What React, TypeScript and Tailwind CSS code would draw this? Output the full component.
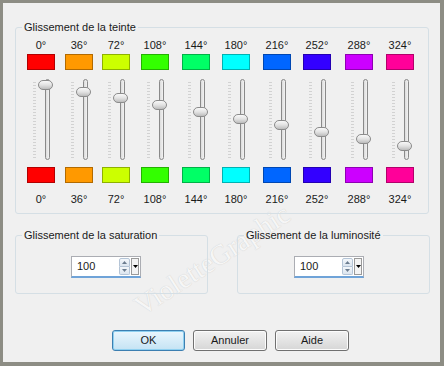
import type { ReactNode } from "react"

const hues = [
  { deg: "0°", color: "bg-[#ff0000]", ml: "ml-0", pos: 8 },
  { deg: "36°", color: "bg-[#ff9900]", ml: "ml-[10px]", pos: 15 },
  { deg: "72°", color: "bg-[#ccff00]", ml: "ml-[9px]", pos: 21 },
  { deg: "108°", color: "bg-[#33ff00]", ml: "ml-[11px]", pos: 28 },
  { deg: "144°", color: "bg-[#00ff66]", ml: "ml-[13px]", pos: 35 },
  { deg: "180°", color: "bg-[#00ffff]", ml: "ml-[12px]", pos: 42 },
  { deg: "216°", color: "bg-[#0066ff]", ml: "ml-[13px]", pos: 48 },
  { deg: "252°", color: "bg-[#3300ff]", ml: "ml-[12px]", pos: 55 },
  { deg: "288°", color: "bg-[#cc00ff]", ml: "ml-[14px]", pos: 62 },
  { deg: "324°", color: "bg-[#ff0099]", ml: "ml-[13px]", pos: 69 },
]

const ticks = Array.from({ length: 26 }, (_, i) => 5 + i * 3)

function Slider({ pos }: { pos: number }) {
  return (
    <svg width="28" height="85" viewBox="0 0 28 85">
      <defs>
        <linearGradient id="thumb" x1="0" y1="0" x2="0" y2="1">
          <stop offset="0" stopColor="#fbfbfb" />
          <stop offset="0.5" stopColor="#e2e2e2" />
          <stop offset="1" stopColor="#b8b8b8" />
        </linearGradient>
        <linearGradient id="track" x1="0" y1="0" x2="1" y2="0">
          <stop offset="0" stopColor="#d8d8d8" />
          <stop offset="1" stopColor="#f6f6f6" />
        </linearGradient>
      </defs>
      {ticks.map((y) => (
        <line key={y} x1="6" x2="9" y1={y + 0.5} y2={y + 0.5} stroke="#d2d2d2" />
      ))}
      <rect x="18.5" y="2.5" width="4" height="80" rx="2" fill="url(#track)" stroke="#8a8a8a" />
      <rect x="11.5" y={pos - 4.5} width="14" height="9" rx="4.5" fill="url(#thumb)" stroke="#8b8b8b" />
    </svg>
  )
}

function Group({ title, className, children }: { title: string; className: string; children: ReactNode }) {
  return (
    <fieldset className={`rounded-[3px] border border-[#d5dfe5] ${className}`}>
      <legend className="ml-[6px] whitespace-nowrap px-[2px] leading-[15px]">{title}</legend>
      {children}
    </fieldset>
  )
}

function SpinBox() {
  return (
    <div className="flex h-[22px] w-[70px] border border-[#abadb3] border-b-2 border-b-[#6fa3d8] bg-white">
      <span className="flex-1 pl-[5px] leading-[19px]">100</span>
      <div className="my-[1px] flex w-[11px] flex-col">
        <div className="flex flex-1 items-center justify-center rounded-t-[2px] border border-[#b4c4d6] bg-gradient-to-b from-[#f4f7fb] to-[#dbe5ef]">
          <svg width="5" height="3" viewBox="0 0 5 3"><path d="M0 3 L2.5 0 L5 3 Z" fill="#6b7c8f" /></svg>
        </div>
        <div className="flex flex-1 items-center justify-center rounded-b-[2px] border border-t-0 border-[#b4c4d6] bg-gradient-to-b from-[#f4f7fb] to-[#dbe5ef]">
          <svg width="5" height="3" viewBox="0 0 5 3"><path d="M0 0 L2.5 3 L5 0 Z" fill="#6b7c8f" /></svg>
        </div>
      </div>
      <div className="mx-[1px] my-[1px] flex w-[8px] items-center justify-center border border-[#9a9a9a] bg-[#f4f4f4]">
        <svg width="5" height="3" viewBox="0 0 5 3"><path d="M0 0 L2.5 3 L5 0 Z" fill="#000" /></svg>
      </div>
    </div>
  )
}

function Button({ label, primary }: { label: string; primary?: boolean }) {
  return (
    <button
      className={`h-[21px] rounded-[3px] border bg-gradient-to-b leading-[19px] ${
        primary
          ? "w-[73px] border-[#3c7fb1] from-[#eaf6fd] to-[#c4e3f4] shadow-[inset_0_0_0_1px_#8fd0f0]"
          : "w-[74px] border-[#707070] from-[#f2f2f2] to-[#d6d6d6] shadow-[inset_0_0_0_1px_#fcfcfc]"
      }`}
    >
      {label}
    </button>
  )
}

export default function App() {
  return (
    <div className="h-[366px] w-[444px] bg-[#8d8d84] pb-[4px] pl-[3px] pr-[4px] pt-[3px] font-['Liberation_Sans',Arial,sans-serif] text-[11px] text-[#1a1a1a]">
      <div className="relative h-full overflow-hidden bg-[#f0f0f0]">
        <div className="pointer-events-none absolute left-[120px] top-[236px] -rotate-[33deg] font-['Liberation_Serif',serif] text-[28px] text-[#f6f6f6] [text-shadow:0_0_1px_#c4c4c4]">
          VioletteGraphic
        </div>

        <Group title="Glissement de la teinte" className="relative ml-[12px] mt-[17px] w-[414px]">
          <div className="flex pb-[6px] pl-[11px]">
            {hues.map((h) => (
              <div key={h.deg} className={`flex w-[28px] flex-col items-center ${h.ml}`}>
                <span className="mt-[3px] leading-[15px]">{h.deg}</span>
                <div className={`mt-[1px] h-[16px] w-[28px] border border-black/30 ${h.color}`} />
                <div className="mt-[7px]">
                  <Slider pos={h.pos} />
                </div>
                <div className={`mt-[5px] h-[16px] w-[28px] border border-black/30 ${h.color}`} />
                <span className="mt-[9px] leading-[15px]">{h.deg}</span>
              </div>
            ))}
          </div>
        </Group>

        <div className="relative mt-[14px] flex">
          <Group title="Glissement de la saturation" className="ml-[12px] h-[66px] w-[193px]">
            <div className="pl-[55px] pt-[13px]">
              <SpinBox />
            </div>
          </Group>
          <Group title="Glissement de la luminosité" className="ml-[29px] h-[66px] w-[193px]">
            <div className="pl-[56px] pt-[13px]">
              <SpinBox />
            </div>
          </Group>
        </div>

        <div className="relative mt-[36px] flex gap-[8px] pl-[109px]">
          <Button label="OK" primary />
          <Button label="Annuler" />
          <Button label="Aide" />
        </div>
      </div>
    </div>
  )
}
